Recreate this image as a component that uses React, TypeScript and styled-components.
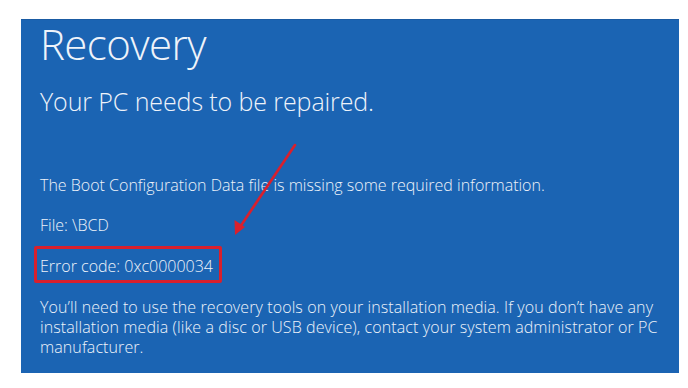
import React from "react";
import styled, { createGlobalStyle } from "styled-components";

const Global = createGlobalStyle`
  html, body { margin: 0; padding: 0; background: #ffffff; }
  body { font-family: "Open Sans", "Noto Sans", sans-serif; }
`;

const Page = styled.div`
  width: 688px;
  height: 388px;
  padding: 19px 0 0 21px;
  box-sizing: border-box;
`;

const Panel = styled.section`
  position: relative;
  width: 658px;
  height: 354px;
  box-sizing: border-box;
  background: #1b64b3;
  border-top: 1px solid #1a5ba3;
  padding: 0 6px 0 19px;
  color: #eef3fa;
  font-family: "Open Sans", "Noto Sans", sans-serif;
  font-weight: 300;
`;

const Title = styled.h1`
  margin: -1px 0 0;
  font-size: 42px;
  line-height: 50px;
  font-weight: 300;
  letter-spacing: -0.6px;
`;

const Subtitle = styled.h2`
  margin: 17px 0 0;
  font-size: 25px;
  line-height: 30px;
  font-weight: 300;
  letter-spacing: -0.1px;
`;

const Line = styled.p<{ $gap: number }>`
  margin: ${(p) => p.$gap}px 0 0;
  font-size: 16px;
  line-height: 19px;
`;

const ErrorMark = styled.span`
  position: relative;
  display: inline-block;
  &::before {
    content: "";
    position: absolute;
    left: -6px;
    top: -11px;
    width: 188px;
    height: 37px;
    box-sizing: border-box;
    border: 3px solid #d9202d;
    border-radius: 2px;
  }
`;

const Paragraph = styled.p`
  margin: 21px 0 0;
  font-size: 16px;
  line-height: 20px;
  letter-spacing: 0.1px;
`;

const ArrowLayer = styled.svg`
  position: absolute;
  left: 0;
  top: 0;
  pointer-events: none;
`;

export default function App() {
  return (
    <>
      <Global />
      <Page>
        <Panel>
          <Title>Recovery</Title>
          <Subtitle>Your PC needs to be repaired.</Subtitle>
          <Line $gap={60}>
            The Boot Configuration Data file is missing some required information.
          </Line>
          <Line $gap={21}>File: \BCD</Line>
          <Line $gap={22}>
            <ErrorMark>Error code: 0xc0000034</ErrorMark>
          </Line>
          <Paragraph>
            You’ll need to use the recovery tools on your installation media. If you don’t have any
            installation media (like a disc or USB device), contact your system administrator or PC
            manufacturer.
          </Paragraph>
          <ArrowLayer width="658" height="354" viewBox="0 0 658 354">
            <line x1="274" y1="125" x2="219" y2="207" stroke="#d9202d" strokeWidth="2.6" strokeLinecap="round" />
            <polygon points="214,215 213.5,200 224,207" fill="#d9202d" />
          </ArrowLayer>
        </Panel>
      </Page>
    </>
  );
}
